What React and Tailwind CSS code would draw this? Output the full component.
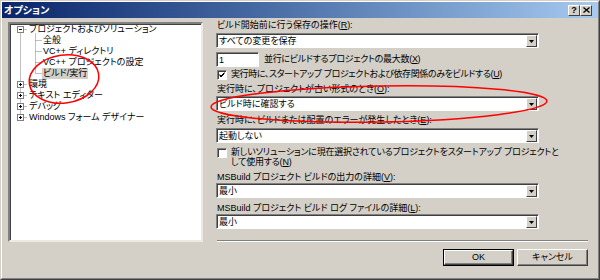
import React from "react";

const FONT = "font-['Liberation_Sans','Noto_Sans_CJK_JP',sans-serif] [font-feature-settings:'palt']";

function Combo({ value }) {
  return (
    <div className="flex h-[15px] w-[323px] border border-t-[#808080] border-l-[#808080] border-b-white border-r-white bg-white shadow-[inset_1px_1px_0_#404040]">
      <div className="flex-1 pl-[2px] pt-[1px] leading-[12px]">{value}</div>
      <div className="mt-[1px] mr-[1px] flex h-[12px] w-[11px] items-center justify-center border border-t-white border-l-white border-b-[#404040] border-r-[#404040] bg-[#d4d0c8]">
        <svg width="5" height="3" viewBox="0 0 5 3">
          <path d="M0 0h5L2.5 3z" fill="#000" />
        </svg>
      </div>
    </div>
  );
}

function CheckBox({ checked }) {
  return (
    <div className="h-[10px] w-[10px] shrink-0 border border-t-[#808080] border-l-[#808080] border-b-white border-r-white bg-white shadow-[inset_1px_1px_0_#404040]">
      {checked && (
        <svg width="8" height="8" viewBox="0 0 8 8">
          <path d="M1.5 3.5l1.5 1.5 3.5-3.5M1.5 4.5l1.5 1.5 3.5-3.5" stroke="#000" strokeWidth="1" fill="none" />
        </svg>
      )}
    </div>
  );
}

function Label({ children, className = "" }) {
  return <div className={"h-[12px] pl-[1px] leading-[12px] " + className}>{children}</div>;
}

function Btn({ children, isDefault }) {
  return (
    <div className={"h-[17px] w-[71px] " + (isDefault ? "border border-black" : "")}>
      <div className="flex h-full w-full items-center justify-center border border-t-white border-l-white border-b-[#404040] border-r-[#404040] bg-[#d4d0c8] shadow-[inset_-1px_-1px_0_#808080]">
        {children}
      </div>
    </div>
  );
}

const tree = [
  { text: "プロジェクトおよびソリューション", level: 0, box: "minus" },
  { text: "全般", level: 1 },
  { text: "VC++ ディレクトリ", level: 1 },
  { text: "VC++ プロジェクトの設定", level: 1 },
  { text: "ビルド/実行", level: 1, selected: true },
  { text: "環境", level: 0, box: "plus" },
  { text: "テキスト エディター", level: 0, box: "plus" },
  { text: "デバッグ", level: 0, box: "plus" },
  { text: "Windows フォーム デザイナー", level: 0, box: "plus" },
];

function TreeLines() {
  const c = (i) => i * 11 + 5.5;
  return (
    <svg className="absolute left-0 top-0" width="60" height="110">
      <g stroke="#808080" strokeWidth="1" strokeDasharray="1 1" fill="none">
        <path d={`M10.5 ${c(0)}V${c(8)}`} />
        <path d={`M25.5 ${c(0) + 4}V${c(4)}`} />
        {tree.map((t, i) =>
          t.level === 0 ? (
            <path key={i} d={`M10.5 ${c(i)}H17`} />
          ) : (
            <path key={i} d={`M25.5 ${c(i)}H32`} />
          )
        )}
      </g>
      {tree.map((t, i) =>
        t.box ? (
          <g key={i}>
            <rect x="7.5" y={c(i) - 3} width="6" height="6" fill="#fff" stroke="#808080" />
            <path d={`M9 ${c(i)}h3`} stroke="#000" />
            {t.box === "plus" && <path d={`M10.5 ${c(i) - 1.5}v3`} stroke="#000" />}
          </g>
        ) : null
      )}
    </svg>
  );
}

export default function App() {
  return (
    <div className={"relative h-[280px] w-[600px] border border-t-[#d4d0c8] border-l-[#d4d0c8] border-b-[#404040] border-r-[#404040] bg-[#d4d0c8] text-[9px] text-black " + FONT}>
      <div className="h-full w-full border border-t-white border-l-white border-b-[#808080] border-r-[#808080]">
        {/* title bar */}
        <div className="flex h-[16px] items-center bg-gradient-to-r from-[#0a246a] to-[#a6caf0] pl-[2px] pr-[4px]">
          <span className="flex-1 text-[10px] font-bold text-white">オプション</span>
          <div className="flex h-[11px] w-[12px] items-center justify-center border border-t-white border-l-white border-b-[#404040] border-r-[#404040] bg-[#d4d0c8] text-[9px] font-bold leading-none">?</div>
          <div className="mr-[2px] flex h-[11px] w-[12px] items-center justify-center border border-t-white border-l-white border-b-[#404040] border-r-[#404040] bg-[#d4d0c8]">
            <svg width="7" height="6" viewBox="0 0 7 6">
              <path d="M0.5 0.5l6 5M6.5 0.5l-6 5" stroke="#000" strokeWidth="1.3" />
            </svg>
          </div>
        </div>

        <div className="flex pl-[6px]">
          {/* tree */}
          <div className="mt-[4px] h-[220px] w-[195px] border-2 border-t-[#808080] border-l-[#808080] border-b-[#ece9e2] border-r-[#ece9e2] bg-white shadow-[inset_1px_1px_0_#404040]">
            <div className="relative">
              <TreeLines />
              {tree.map((t, i) => (
                <div key={i} className={"relative flex h-[11px] items-center " + (t.level === 0 ? "pl-[18px]" : "pl-[32px]")}>
                  <span className={"px-[1px] leading-[11px] " + (t.selected ? "bg-[#d4d0c8]" : "")}>{t.text}</span>
                </div>
              ))}
            </div>
          </div>

          {/* right column */}
          <div className="ml-[13px] flex w-[372px] flex-col">
            <Label className="mt-[1px]">ビルド開始前に行う保存の操作(<u>R</u>):</Label>
            <div className="mt-[2px]">
              <Combo value="すべての変更を保存" />
            </div>
            <div className="mt-[4px] flex h-[15px] items-center">
              <div className="h-[15px] w-[43px] border border-t-[#808080] border-l-[#808080] border-b-white border-r-white bg-white pl-[2px] pt-[1px] leading-[12px] shadow-[inset_1px_1px_0_#404040]">1</div>
              <span className="ml-[5px] tracking-[-0.3px]">並行にビルドするプロジェクトの最大数(<u>X</u>)</span>
            </div>
            <div className="mt-[2px] flex h-[12px] items-center pl-[1px]">
              <CheckBox checked />
              <span className="ml-[4px] tracking-[-0.4px]">実行時に、スタートアップ プロジェクトおよび依存関係のみをビルドする(<u>U</u>)</span>
            </div>
            <Label className="mt-[2px]">実行時に、プロジェクトが古い形式のとき(<u>O</u>):</Label>
            <div className="mt-[1px]">
              <Combo value="ビルド時に確認する" />
            </div>
            <Label className="mt-[3px]">実行時に、ビルドまたは配置のエラーが発生したとき(<u>E</u>):</Label>
            <div className="mt-[2px]">
              <Combo value="起動しない" />
            </div>
            <div className="mt-[4px] flex h-[20px] pl-[1px]">
              <div className="mt-[1px]">
                <CheckBox />
              </div>
              <div className="ml-[4px] leading-[10px] tracking-[-0.2px]">
                新しいソリューションに現在選択されているプロジェクトをスタートアップ プロジェクトと
                <br />
                して使用する(<u>N</u>)
              </div>
            </div>
            <Label className="mt-[4px]">MSBuild プロジェクト ビルドの出力の詳細(<u>V</u>):</Label>
            <Combo value="最小" />
            <Label className="mt-[4px]">MSBuild プロジェクト ビルド ログ ファイルの詳細(<u>L</u>):</Label>
            <Combo value="最小" />

            <div className="ml-[1px] mt-[11px] h-[2px] border-t border-b border-t-[#808080] border-b-white" />
            <div className="mt-[7px] flex justify-end gap-[3px]">
              <Btn isDefault>OK</Btn>
              <Btn>キャンセル</Btn>
            </div>
          </div>
        </div>
      </div>

      {/* red annotation marks */}
      <svg className="pointer-events-none absolute left-0 top-0" width="600" height="280">
        <g stroke="#f00" strokeWidth="1.5" fill="none">
          <ellipse cx="63" cy="78" rx="35" ry="24" transform="rotate(-8 63 78)" />
          <ellipse cx="378" cy="103" rx="168" ry="18" transform="rotate(-1 378 103)" />
        </g>
      </svg>
    </div>
  );
}
